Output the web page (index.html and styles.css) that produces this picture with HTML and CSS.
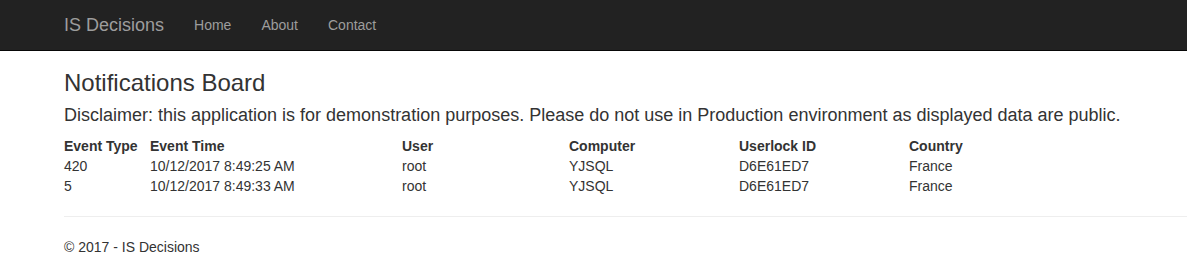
FILE: index.html
```html
<!DOCTYPE html>
<html lang="en">
<head>
<meta charset="utf-8">
<title>Notifications Board - IS Decisions</title>
<link rel="stylesheet" href="styles.css">
</head>
<body>
<div class="navbar">
  <div class="container nav-inner">
    <a class="brand" href="#">IS Decisions</a>
    <ul class="nav">
      <li><a href="#">Home</a></li>
      <li><a href="#">About</a></li>
      <li><a href="#">Contact</a></li>
    </ul>
  </div>
</div>
<div class="container body-content">
  <h3 class="title">Notifications Board</h3>
  <h4 class="disclaimer">Disclaimer: this application is for demonstration purposes. Please do not use in Production environment as displayed data are public.</h4>
  <table class="events">
    <colgroup>
      <col class="c1"><col class="c2"><col class="c3"><col class="c4"><col class="c5"><col class="c6">
    </colgroup>
    <thead>
      <tr><th>Event Type</th><th>Event Time</th><th>User</th><th>Computer</th><th>Userlock ID</th><th>Country</th></tr>
    </thead>
    <tbody>
      <tr><td>420</td><td>10/12/2017 8:49:25 AM</td><td>root</td><td>YJSQL</td><td>D6E61ED7</td><td>France</td></tr>
      <tr><td>5</td><td>10/12/2017 8:49:33 AM</td><td>root</td><td>YJSQL</td><td>D6E61ED7</td><td>France</td></tr>
    </tbody>
  </table>
  <hr class="rule">
  <footer class="footer">
    <p>&copy; 2017 - IS Decisions</p>
  </footer>
</div>
</body>
</html>
```
FILE: styles.css
```css
html, body {
  margin: 0;
  padding: 0;
  overflow: hidden;
}
body {
  font-family: "Liberation Sans", Arial, Helvetica, sans-serif;
  font-size: 14px;
  line-height: 20px;
  color: #333;
  background: #fff;
}
.container {
  width: 1140px;
  margin-left: 49px;
  padding: 0 15px;
}
.navbar {
  background: #222;
  border-bottom: 1px solid #080808;
  height: 50px;
}
.nav-inner {
  display: flex;
  align-items: flex-start;
  height: 50px;
}
.brand {
  font-size: 18px;
  line-height: 20px;
  padding: 15px 15px 15px 0;
  color: #9d9d9d;
  text-decoration: none;
}
.nav {
  display: flex;
  list-style: none;
  margin: 0;
  padding: 0;
}
.nav a {
  display: block;
  padding: 15px;
  line-height: 20px;
  color: #9d9d9d;
  text-decoration: none;
}
.title {
  font-size: 24px;
  font-weight: 500;
  line-height: 1.1;
  margin: 19px 0 10px;
}
.disclaimer {
  font-size: 18px;
  font-weight: 500;
  line-height: 1.1;
  margin: 10px 0 10px;
}
.events {
  border-collapse: collapse;
  border-spacing: 0;
  table-layout: fixed;
  width: 1140px;
}
.events th, .events td {
  padding: 0;
  text-align: left;
  line-height: 20px;
  white-space: nowrap;
}
.events th { font-weight: bold; }
.c1 { width: 86px; }
.c2 { width: 252px; }
.c3 { width: 167px; }
.c4 { width: 170px; }
.c5 { width: 170px; }
.rule {
  margin: 20px 0;
  border: 0;
  border-top: 1px solid #eee;
}
.footer p {
  margin: 0 0 10px;
}
```
